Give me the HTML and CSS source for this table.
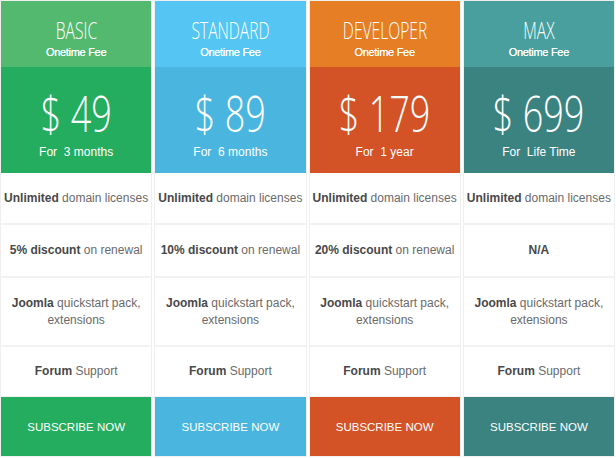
FILE: index.html
```html
<!DOCTYPE html>
<html lang="en">
<head>
<meta charset="utf-8">
<title>Pricing</title>
<link rel="stylesheet" href="styles.css">
</head>
<body>
<div class="pricing">
  <div class="plan plan-basic">
    <div class="plan-head"><h2 class="plan-name"><span>BASIC</span></h2><p class="plan-fee">Onetime Fee</p></div>
    <div class="plan-price"><div class="amount"><span>$ 49</span></div><p class="term">For&nbsp; 3 months</p></div>
    <ul class="features">
      <li class="f-a"><p><b>Unlimited</b> domain licenses</p></li>
      <li class="f-b"><p><b>5% discount</b> on renewal</p></li>
      <li class="f-c"><p><b>Joomla</b> quickstart pack, extensions</p></li>
      <li class="f-d"><p><b>Forum</b> Support</p></li>
    </ul>
    <a class="subscribe" href="#">SUBSCRIBE NOW</a>
  </div>
  <div class="plan plan-standard">
    <div class="plan-head"><h2 class="plan-name"><span>STANDARD</span></h2><p class="plan-fee">Onetime Fee</p></div>
    <div class="plan-price"><div class="amount"><span>$ 89</span></div><p class="term">For&nbsp; 6 months</p></div>
    <ul class="features">
      <li class="f-a"><p><b>Unlimited</b> domain licenses</p></li>
      <li class="f-b"><p><b>10% discount</b> on renewal</p></li>
      <li class="f-c"><p><b>Joomla</b> quickstart pack, extensions</p></li>
      <li class="f-d"><p><b>Forum</b> Support</p></li>
    </ul>
    <a class="subscribe" href="#">SUBSCRIBE NOW</a>
  </div>
  <div class="plan plan-developer">
    <div class="plan-head"><h2 class="plan-name"><span>DEVELOPER</span></h2><p class="plan-fee">Onetime Fee</p></div>
    <div class="plan-price"><div class="amount"><span>$ 179</span></div><p class="term">For&nbsp; 1 year</p></div>
    <ul class="features">
      <li class="f-a"><p><b>Unlimited</b> domain licenses</p></li>
      <li class="f-b"><p><b>20% discount</b> on renewal</p></li>
      <li class="f-c"><p><b>Joomla</b> quickstart pack, extensions</p></li>
      <li class="f-d"><p><b>Forum</b> Support</p></li>
    </ul>
    <a class="subscribe" href="#">SUBSCRIBE NOW</a>
  </div>
  <div class="plan plan-max">
    <div class="plan-head"><h2 class="plan-name"><span>MAX</span></h2><p class="plan-fee">Onetime Fee</p></div>
    <div class="plan-price"><div class="amount"><span>$ 699</span></div><p class="term">For&nbsp; Life Time</p></div>
    <ul class="features">
      <li class="f-a"><p><b>Unlimited</b> domain licenses</p></li>
      <li class="f-b"><p><b>N/A</b></p></li>
      <li class="f-c"><p><b>Joomla</b> quickstart pack, extensions</p></li>
      <li class="f-d"><p><b>Forum</b> Support</p></li>
    </ul>
    <a class="subscribe" href="#">SUBSCRIBE NOW</a>
  </div>
</div>
</body>
</html>
```
FILE: styles.css
```css
html, body {
  margin: 0;
  padding: 0;
  background: #ffffff;
}
body {
  font-family: "Liberation Sans", Arial, sans-serif;
  color: #666;
}
.pricing {
  width: 615px;
  display: grid;
  grid-template-columns: repeat(4, 1fr);
  column-gap: 2px;
}
.plan {
  display: flex;
  flex-direction: column;
  border: 1px solid #efefef;
  min-width: 0;
}
.plan-head {
  height: 66px;
  box-sizing: border-box;
  padding-top: 17px;
  text-align: center;
  color: #fff;
}
.plan-name {
  margin: 0;
  font-family: "Open Sans", "Liberation Sans", sans-serif;
  font-weight: 300;
  font-size: 23px;
  line-height: 24px;
}
.plan-name span {
  display: inline-block;
  transform: scaleX(0.68);
}
.plan-fee {
  margin: 4px 0 0;
  font-size: 11px;
  letter-spacing: -0.3px;
  line-height: 13px;
  text-shadow: 0 0 0.4px #fff;
}
.plan-price {
  height: 106px;
  box-sizing: border-box;
  padding-top: 21px;
  text-align: center;
  color: #fff;
}
.amount {
  font-family: "Open Sans", "Liberation Sans", sans-serif;
  font-weight: 300;
  font-size: 50px;
  line-height: 50px;
}
.amount span {
  display: inline-block;
  transform: scaleX(0.72);
  white-space: pre;
}
.term {
  margin: 7px 0 0;
  font-size: 12px;
  line-height: 14px;
}
.features {
  list-style: none;
  margin: 0;
  padding: 0;
}
.features li {
  display: flex;
  align-items: center;
  justify-content: center;
  text-align: center;
  padding: 0 2px;
  font-size: 12px;
  color: #6a6a6a;
}
.features p {
  margin: 0;
  line-height: 17px;
}
.features li + li {
  border-top: 2px solid #f2f2f2;
}
.features b {
  color: #484848;
}
.f-a { height: 50px; }
.f-b { height: 51px; }
.f-c { height: 67px; }
.f-d { height: 49px; }
.subscribe {
  display: flex;
  align-items: center;
  justify-content: center;
  height: 59px;
  border-top: 1px solid #f2f2f2;
  color: #fff;
  text-decoration: none;
  font-size: 11.5px;
}
.plan-basic .plan-head { background: #52b96f; }
.plan-basic .plan-price, .plan-basic .subscribe { background-color: #25ad5f; }
.plan-standard .plan-head { background: #55c6f3; }
.plan-standard .plan-price, .plan-standard .subscribe { background-color: #4ab6df; }
.plan-developer .plan-head { background: #e67e25; }
.plan-developer .plan-price, .plan-developer .subscribe { background-color: #d45326; }
.plan-max .plan-head { background: #489f9d; }
.plan-max .plan-price, .plan-max .subscribe { background-color: #3a8381; }
```
